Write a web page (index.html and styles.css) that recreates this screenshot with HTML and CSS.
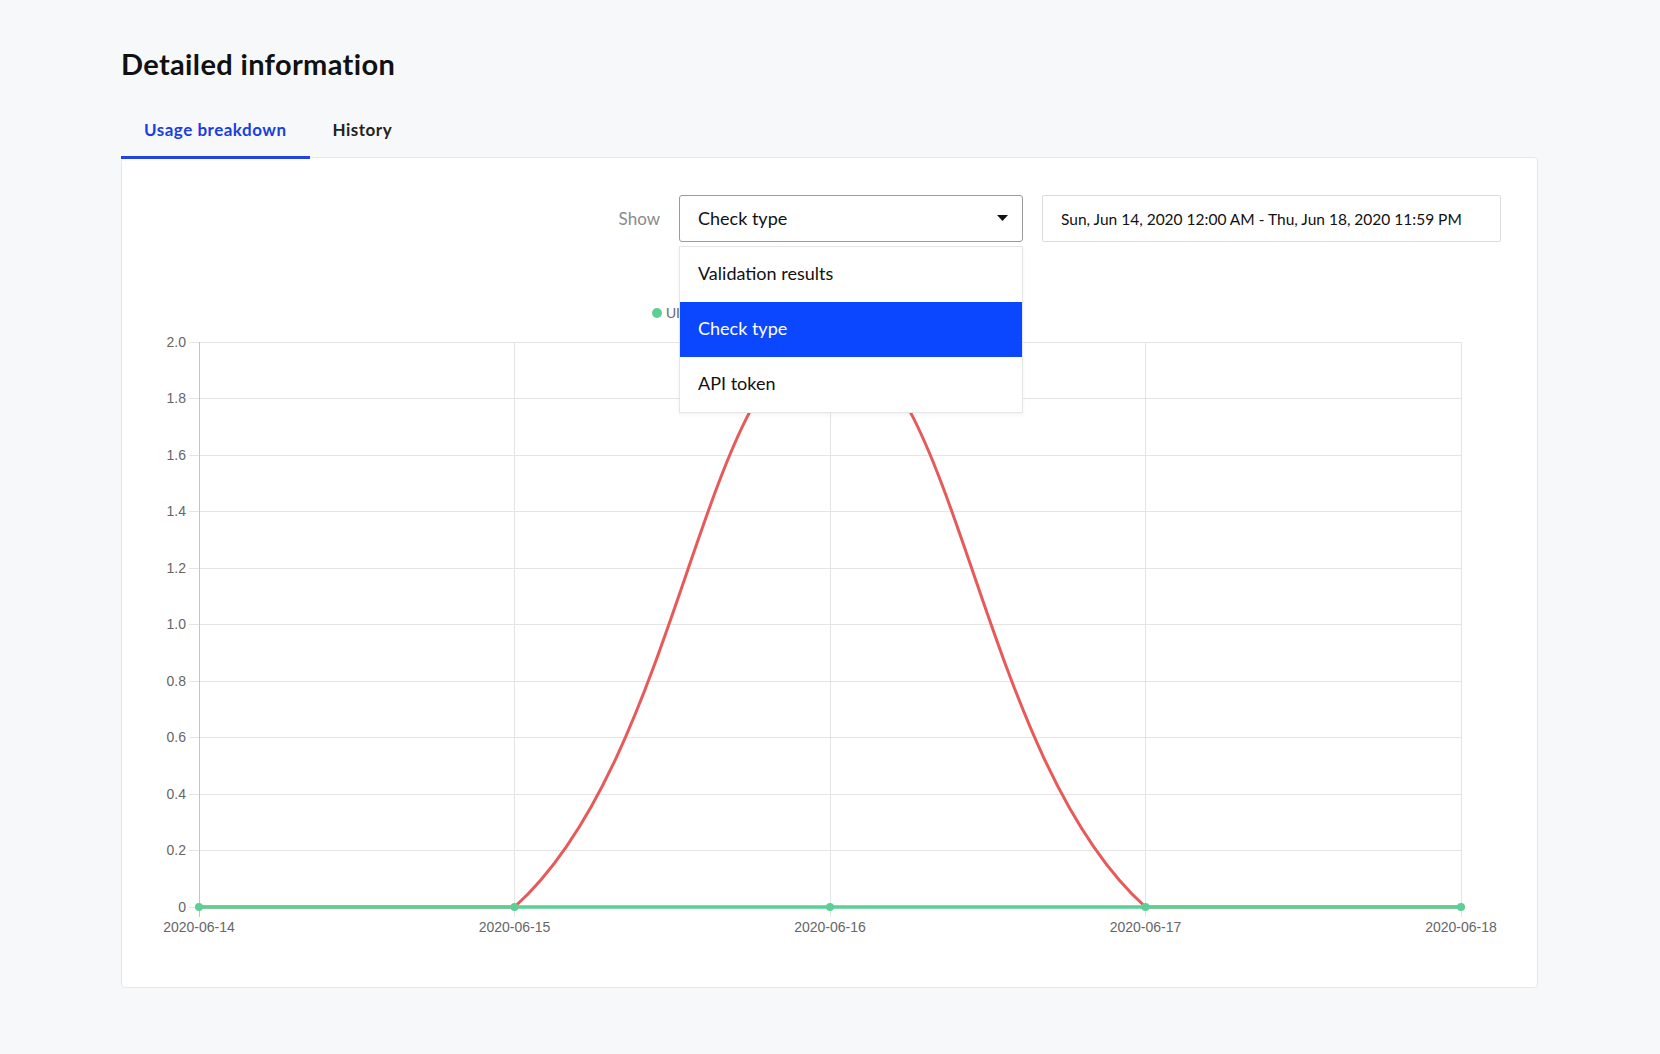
FILE: index.html
```html
<!DOCTYPE html>
<html lang="en">
<head>
<meta charset="utf-8">
<title>Detailed information</title>
<link rel="stylesheet" href="styles.css">
</head>
<body>
<main class="page">
  <h1 class="title">Detailed information</h1>
  <nav class="tabs">
    <div class="tab tab-active">Usage breakdown</div>
    <div class="tab">History</div>
  </nav>
  <section class="card">
    <div class="controls">
      <span class="show-label">Show</span>
      <div class="select-wrap">
        <div class="select">
          <span>Check type</span>
          <svg class="caret" width="11" height="6" viewBox="0 0 11 6"><path d="M0 0 L11 0 L5.5 6 Z" fill="#111"/></svg>
        </div>
        <ul class="menu">
          <li class="menu-item">Validation results</li>
          <li class="menu-item menu-item-active">Check type</li>
          <li class="menu-item">API token</li>
        </ul>
      </div>
      <div class="date-range">Sun, Jun 14, 2020 12:00 AM - Thu, Jun 18, 2020 11:59 PM</div>
    </div>
    <svg class="chart" width="1415" height="700" viewBox="122 262 1415 700">
      <g class="legend">
        <circle cx="657" cy="313" r="5" fill="#5ccf94"/>
        <text x="666" y="318">UI</text>
        <circle cx="700" cy="313" r="5" fill="#e85a5a"/>
        <text x="709" y="318">API</text>
      </g>
      <g class="grid" stroke="#e5e5e5" stroke-width="1">
        <line x1="189" y1="342.5" x2="1461" y2="342.5"/>
        <line x1="189" y1="398.5" x2="1461" y2="398.5"/>
        <line x1="189" y1="455.5" x2="1461" y2="455.5"/>
        <line x1="189" y1="511.5" x2="1461" y2="511.5"/>
        <line x1="189" y1="568.5" x2="1461" y2="568.5"/>
        <line x1="189" y1="624.5" x2="1461" y2="624.5"/>
        <line x1="189" y1="681.5" x2="1461" y2="681.5"/>
        <line x1="189" y1="737.5" x2="1461" y2="737.5"/>
        <line x1="189" y1="794.5" x2="1461" y2="794.5"/>
        <line x1="189" y1="850.5" x2="1461" y2="850.5"/>
        <line x1="189" y1="907.5" x2="1461" y2="907.5"/>
        <line x1="514.5" y1="342" x2="514.5" y2="917"/>
        <line x1="830.5" y1="342" x2="830.5" y2="917"/>
        <line x1="1145.5" y1="342" x2="1145.5" y2="917"/>
        <line x1="1461.5" y1="342" x2="1461.5" y2="917"/>
        <line x1="199.5" y1="342" x2="199.5" y2="917" stroke="#c4c4c4"/>
      </g>
      <g class="ylabels">
        <text x="186" y="347">2.0</text>
        <text x="186" y="403">1.8</text>
        <text x="186" y="460">1.6</text>
        <text x="186" y="516">1.4</text>
        <text x="186" y="573">1.2</text>
        <text x="186" y="629">1.0</text>
        <text x="186" y="686">0.8</text>
        <text x="186" y="742">0.6</text>
        <text x="186" y="799">0.4</text>
        <text x="186" y="855">0.2</text>
        <text x="186" y="912">0</text>
      </g>
      <g class="xlabels">
        <text x="199" y="932">2020-06-14</text>
        <text x="514.5" y="932">2020-06-15</text>
        <text x="830" y="932">2020-06-16</text>
        <text x="1145.5" y="932">2020-06-17</text>
        <text x="1461" y="932">2020-06-18</text>
      </g>
      <path d="M199 907 C325 907 431.4 907 514.5 907 C684.2 755.1 703.8 342 830 342 C956.2 342 975.8 755.1 1145.5 907 C1228.6 907 1335 907 1461 907" fill="none" stroke="#e85a5a" stroke-width="3"/>
      <line x1="199" y1="907" x2="1461" y2="907" stroke="#5ccf94" stroke-width="3.5"/>
      <g fill="#5ccf94">
        <circle cx="199" cy="907" r="4"/>
        <circle cx="514.5" cy="907" r="4"/>
        <circle cx="830" cy="907" r="4"/>
        <circle cx="1145.5" cy="907" r="4"/>
        <circle cx="1461" cy="907" r="4"/>
      </g>
    </svg>
  </section>
</main>
</body>
</html>
```
FILE: styles.css
```css
* { box-sizing: border-box; }
html, body { margin: 0; padding: 0; }
body {
  background: #f7f8fa;
  font-family: Lato, "Open Sans", sans-serif;
  color: #111;
}
.page {
  padding: 47px 122px 60px 121px;
}
.title {
  margin: 0 0 20px 0;
  font-size: 29px;
  line-height: 34px;
  font-weight: 700;
  letter-spacing: 0.35px;
  color: #111;
}
.tabs {
  display: flex;
  position: relative;
  z-index: 1;
}
.tab {
  padding: 18px 23px 15px 23px;
  font-size: 17px;
  line-height: 22px;
  font-weight: 700;
  letter-spacing: 0.5px;
  color: #222;
  border-bottom: 3px solid transparent;
}
.tab-active {
  color: #1a3fe0;
  border-bottom-color: #1e44e6;
}
.card {
  margin-top: -2px;
  background: #fff;
  border: 1px solid #e6e7ea;
  border-radius: 4px;
  padding: 37px 36px 25px 0;
}
.controls {
  display: flex;
  justify-content: flex-end;
  align-items: center;
  gap: 19px;
  height: 47px;
}
.show-label {
  font-size: 17px;
  color: #8a8a8a;
}
.select-wrap {
  position: relative;
  width: 344px;
  height: 47px;
}
.select {
  display: flex;
  justify-content: space-between;
  align-items: center;
  height: 47px;
  padding: 0 14px 1px 18px;
  border: 1px solid #9a9a9a;
  border-radius: 3px;
  font-size: 18px;
  color: #111;
  background: #fff;
}
.menu {
  position: absolute;
  top: 51px;
  left: 0;
  width: 344px;
  margin: 0;
  padding: 0;
  list-style: none;
  background: #fff;
  border: 1px solid #e6e6e6;
  box-shadow: 0 2px 4px rgba(0, 0, 0, 0.05);
  z-index: 5;
}
.menu-item {
  height: 55px;
  display: flex;
  align-items: center;
  padding: 0 0 4px 18px;
  font-size: 18px;
  color: #111;
}
.menu-item-active {
  background: #0b47ff;
  color: #fff;
}
.date-range {
  width: 459px;
  height: 47px;
  display: flex;
  align-items: center;
  padding-left: 18px;
  border: 1px solid #dcdcdc;
  border-radius: 2px;
  font-size: 15.5px;
  color: #111;
}
.chart {
  display: block;
  margin-top: 20px;
}
.chart text {
  font-family: "Liberation Sans", Arial, sans-serif;
  font-size: 14px;
  fill: #666;
}
.ylabels text { text-anchor: end; }
.xlabels text { text-anchor: middle; }
.legend text { fill: #666; }
```
